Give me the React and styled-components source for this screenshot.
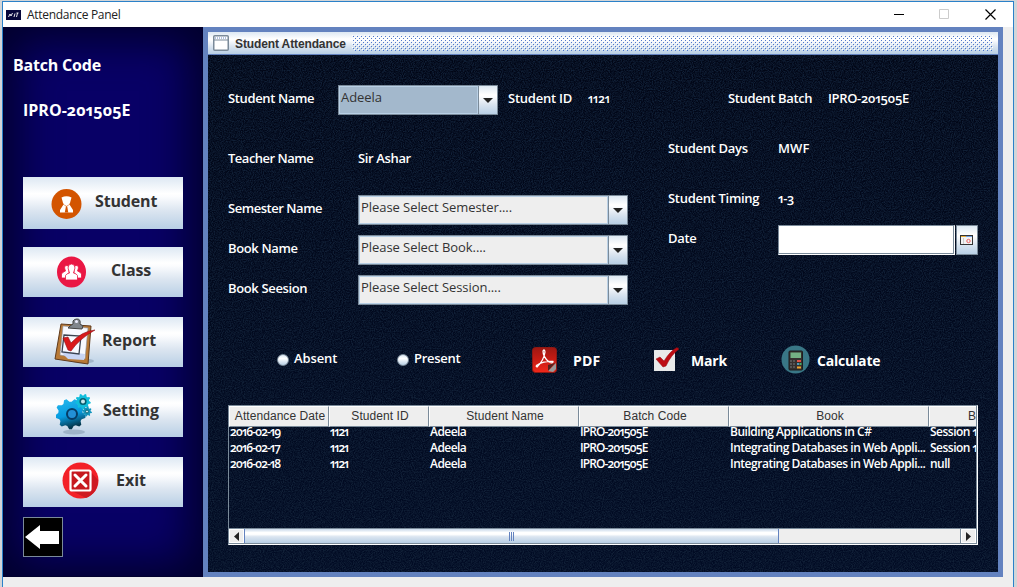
import React from "react";
import styled, { createGlobalStyle, css } from "styled-components";

const steel = "#7a8a99";
const blue = "#6382bf";
const metal = "linear-gradient(#dde8f3 0%, #ffffff 32%, #fbfcfe 38%, #dbe5f0 65%, #b8cfe5 100%)";
const humanist = `"Open Sans", "Noto Sans", sans-serif`;
const arial = `"Liberation Sans", Arial, sans-serif`;

const Global = createGlobalStyle`
  * { box-sizing: border-box; }
  html, body { margin: 0; height: 100%; overflow: hidden; }
  body { background: #d2d5d8; font-family: ${humanist}; font-size: 13px; color: #333; }
  #root { height: 100%; }
  svg { display: block; flex: none; }
`;

const Desktop = styled.div`
  height: 587px;
  padding: 1px 3px 0 2px;
  overflow: hidden;
`;
const Window = styled.div`
  height: 587px;
  background: #eee;
  border: 1px solid #2b81c9;
  border-bottom: 0;
`;
const TitleBar = styled.header`
  display: flex;
  height: 25px;
  align-items: center;
  background: #fff;
  padding: 0 17px 0 3px;
`;
const AppIcon = styled.svg`
  margin-right: 6px;
`;
const WindowTitle = styled.span`
  flex: 1;
  font-size: 12px;
  line-height: 24px;
  letter-spacing: -0.3px;
  color: #222;
`;
const Controls = styled.div`
  display: flex;
  gap: 35px;
`;
const Body = styled.div`
  display: flex;
  height: 550px;
`;

const Sidebar = styled.aside`
  width: 200px;
  padding: 25px 20px 0;
  background: #080066;
  box-shadow: inset 0 0 42px 14px #02002c, inset 0 0 0 1px #05003a;
`;
const BatchTitle = styled.div`
  margin-left: -10px;
  height: 45px;
  font-size: 16px;
  font-weight: 700;
  line-height: 26px;
  letter-spacing: -0.2px;
  color: #fff;
`;
const BatchValue = styled.div`
  height: 80px;
  font-size: 16px;
  font-weight: 700;
  line-height: 26px;
  letter-spacing: 0;
  font-feature-settings: "onum" 1, "pnum" 1;
  color: #fff;
`;
const NavList = styled.nav`
  display: flex;
  flex-direction: column;
`;
const NavButton = styled.button`
  display: flex;
  width: 160px;
  height: ${(p) => p.$h || 50}px;
  margin: 0 0 ${(p) => p.$gap || 20}px;
  padding: 0 0 0 ${(p) => p.$start}px;
  border: 0;
  background: ${metal};
`;
const NavIcon = styled.span`
  width: ${(p) => p.$w}px;
  padding-top: ${(p) => p.$top}px;
`;
const NavText = styled.span`
  font: 700 16px/${(p) => p.$lh || 47}px ${humanist};
  letter-spacing: ${(p) => p.$ls || 0}px;
  color: #333;
  white-space: nowrap;
`;
const BackButton = styled.button`
  width: 40px;
  height: 40px;
  padding: 0;
  border: 1px solid ${steel};
  background: #000;
`;

const Frame = styled.main`
  width: 800px;
  padding: 5px;
  background: ${blue};
`;
const FrameTitle = styled.div`
  display: flex;
  align-items: center;
  height: 23px;
  padding: 0 5px 0 5px;
  border-bottom: 1px solid ${blue};
  background: ${metal};
`;
const FrameName = styled.span`
  width: 117px;
  margin-left: 6px;
  padding-top: 2px;
  font: 700 12px/20px ${arial};
  letter-spacing: -0.12px;
  color: #333;
  white-space: nowrap;
`;
const Bumps = styled.svg`
  flex: 1;
  height: 16px;
`;
const Panel = styled.section`
  position: relative;
  height: 517px;
  padding: 30px 20px 0;
  background: #020a19;
  color: #fff;
`;
const Grain = styled.svg`
  position: absolute;
  inset: 0;
  width: 100%;
  height: 100%;
`;
const Form = styled.div`
  position: relative;
`;
const Row = styled.div`
  display: flex;
  height: 30px;
  margin-top: ${(p) => p.$gap || 0}px;
`;
const Columns = styled.div`
  display: flex;
`;
const Column = styled.div`
  width: ${(p) => p.$w}px;
`;
const Label = styled.span`
  width: ${(p) => p.$w}px;
  font-weight: 600;
  font-size: ${(p) => p.$size || 13}px;
  line-height: 27px;
  letter-spacing: ${(p) => p.$ls ?? -0.36}px;
  font-feature-settings: "onum" 1, "pnum" 1;
  white-space: nowrap;
`;
const ComboBox = styled.div`
  display: flex;
  width: ${(p) => p.$w}px;
  height: 30px;
  margin-right: 10px;
  border: 1px solid ${steel};
`;
const ComboValue = styled.span`
  flex: 1;
  padding-left: 1px;
  border: 1px solid #b8cfe5;
  background: ${(p) => (p.$active ? "#a3b8cc" : "#eee")};
  color: #333;
  line-height: 21px;
  letter-spacing: -0.06px;
  white-space: nowrap;
`;
const ComboButton = styled.span`
  display: flex;
  width: 19px;
  align-items: center;
  justify-content: center;
  border-left: 1px solid ${steel};
  background: ${metal};
`;
const DateField = styled.div`
  display: flex;
  gap: 1px;
  width: 200px;
`;
const DateInput = styled.div`
  width: 177px;
  padding: 0 1px 1px 0;
  border: 1px solid ${steel};
  border-right-color: #fff;
  border-bottom-color: #fff;
  background: #fff;
  box-shadow: inset -1px -1px ${steel};
`;
const DateButton = styled.div`
  display: flex;
  width: 22px;
  align-items: center;
  justify-content: center;
  border: 1px solid ${steel};
  background: ${metal};
`;

const Actions = styled.div`
  display: flex;
  height: 40px;
  margin: 35px 0 25px;
  padding-left: 49px;
`;
const Radio = styled.label`
  display: flex;
  width: ${(p) => p.$w}px;
  height: 37px;
  align-items: center;
  gap: 5px;
`;
const RadioDot = styled.i`
  width: 12px;
  height: 12px;
  margin-top: 3px;
  border: 1px solid ${steel};
  border-radius: 50%;
  background: linear-gradient(#dde8f3, #fff 35%, #b8cfe5);
`;
const Action = styled.div`
  display: flex;
  width: ${(p) => p.$w}px;
  align-items: center;
`;
const ActionText = styled.span`
  margin-left: ${(p) => p.$ml}px;
  padding-top: 1px;
  font-weight: 700;
  font-size: 14px;
  letter-spacing: ${(p) => p.$ls || 0}px;
`;

const TableBox = styled.div`
  display: flex;
  flex-direction: column;
  width: 750px;
  height: 140px;
  border: 1px solid ${steel};
  border-right-color: #fff;
  border-bottom-color: #fff;
`;
const TableView = styled.div`
  width: 748px;
  height: 122px;
  overflow: hidden;
  border-right: 1px solid ${steel};
`;
const columnGrid = css`
  display: grid;
  grid-template-columns: 100px 100px 150px 150px 200px 150px;
  width: 850px;
`;
const HeaderRow = styled.div`
  ${columnGrid}
  height: 20px;
`;
const HeaderCell = styled.div`
  padding-left: 2px;
  border: 1px solid #fff;
  border-right-color: ${steel};
  border-bottom-color: ${steel};
  background: #eee;
  color: #333;
  font: 12px/19px ${arial};
  letter-spacing: 0.06px;
  text-align: center;
  white-space: nowrap;
`;
const DataRow = styled.div`
  ${columnGrid}
  height: 16px;
`;
const DataCell = styled.div`
  padding-left: 1px;
  font-size: 12px;
  font-weight: 600;
  line-height: 12px;
  letter-spacing: ${(p) => p.$ls}px;
  font-feature-settings: "onum" 1, "pnum" 1;
  white-space: nowrap;
`;
const ScrollBar = styled.div`
  display: flex;
  height: 16px;
  border: solid ${steel};
  border-width: 1px 1px 1px 0;
  background: #eee;
`;
const ScrollButton = styled.div`
  display: flex;
  width: 15px;
  align-items: center;
  justify-content: center;
  border: 1px solid #fff;
  box-shadow: ${(p) => (p.$end ? `-1px 0 ${steel}` : "none")};
`;
const Thumb = styled.div`
  display: flex;
  width: 535px;
  align-items: center;
  justify-content: center;
  border: solid ${blue};
  border-width: 0 1px;
  background: linear-gradient(#c8d8ea, #fff 25%, #fff 38%, #dbe5f0 55%, #b8cfe5);
`;
const Track = styled.div`
  flex: 1;
`;

const Arrow = ({ d, w = 10, h = 5 }) => (
  <svg width={w} height={h} viewBox={`0 0 ${w} ${h}`}><path d={d} fill="#222" /></svg>
);

const Combo = ({ w, active, children }) => (
  <ComboBox $w={w}>
    <ComboValue $active={active}>{children}</ComboValue>
    <ComboButton><Arrow d="M0 0H10L5 5Z" /></ComboButton>
  </ComboBox>
);

const StudentIcon = () => (
  <svg width="32" height="32" viewBox="0 0 32 32">
    <circle cx="15.500" cy="16" r="15" fill="#d35400" />
    <path d="M10.500 9.500Q15.500 7 20.500 9.500L19.500 13Q19 17 15.500 18Q12 17 11.500 13Z" fill="#fff" />
    <path d="M12.500 16.500L15.500 19L18.500 16.500L22 22V24.500H9V22Z" fill="#fff" />
    <path d="M14.800 19h1.500l1 5.500h-3.500Z" fill="#d35400" />
  </svg>
);
const ClassIcon = () => (
  <svg width="30" height="34" viewBox="0 0 30 34">
    <ellipse cx="14.500" cy="17" rx="14.500" ry="15.500" fill="#ea1744" />
    <g fill="#fff" stroke="#ea1744" strokeWidth="0.800">
      <path d="M4.500 23V19Q5.500 17 8.500 16Q6.500 11 9 10.500Q12 10 12 13V23ZM24.500 23V19Q23.500 17 20.500 16Q22.500 11 20 10.500Q17 10 17 13V23Z" />
      <path d="M8.500 25V20.500Q9.500 18.500 12.500 18L11 13Q11 9 14.500 9Q18 9 18 13L16.500 18Q19.500 18.500 20.500 20.500V25Z" />
    </g>
  </svg>
);
const ReportIcon = () => (
  <svg width="42" height="48" viewBox="0 0 42 48">
    <ellipse cx="29" cy="43" rx="11" ry="2.500" fill="#8195aa" opacity="0.5" />
    <path d="M7 6L37 8L34 46L1 41Z" fill="#b87936" stroke="#5f3a1c" />
    <path d="M9 8L34 10L31 41L6 37Z" fill="#f7f9ff" stroke="#8993a2" strokeWidth="0.600" />
    <path d="M6 33L14 41L30 42L31 36Z" fill="#c8d5f5" />
    <path d="M10 17L27 18L25 36L8 34Z" fill="none" stroke="#3b4352" strokeWidth="1.300" />
    <path d="M16 8L19 6V3Q20 1 23 1Q27 1 26 6L29 8L28 11L14 10Z" fill="#81868c" stroke="#444" />
    <circle cx="22.500" cy="3.500" r="1.500" fill="#eef" />
    <path d="M9 20L14 19L17 25Q28 13 41 12Q25 21 17 33L14 32Z" fill="#d9191b" stroke="#8f1115" strokeWidth="0.600" />
  </svg>
);
const gear = (cx, cy, r, n, depth) => {
  const points = [];
  for (let i = 0; i < n * 4; i++) {
    const radius = i % 4 < 2 ? r : r - depth;
    const angle = ((i + 0.5) / (n * 4)) * Math.PI * 2;
    points.push(`${cx + radius * Math.cos(angle)} ${cy + radius * Math.sin(angle)}`);
  }
  return `M${points.join("L")}Z`;
};
const SettingIcon = () => (
  <svg width="36" height="42" viewBox="0 0 36 42">
    <defs>
      <linearGradient id="gearFill" x2="0.300" y2="1">
        <stop stopColor="#27b9ed" /><stop offset="0.600" stopColor="#079be0" /><stop offset="1" stopColor="#06394f" />
      </linearGradient>
    </defs>
    <ellipse cx="18" cy="38" rx="11" ry="2.500" fill="#7d94aa" opacity="0.5" />
    <path d={gear(14.5, 20, 15.3, 9, 3)} fill="url(#gearFill)" />
    <path d={gear(27, 7.5, 7.8, 9, 1.7)} fill="#10bedc" />
    <path d={gear(31, 17.5, 5, 8, 1.3)} fill="#1294bd" />
    <circle cx="16" cy="20" r="5" fill="#2390d6" stroke="#063c65" strokeWidth="2" />
    <circle cx="27" cy="7.500" r="2.800" fill="#c7e6ed" stroke="#065f70" strokeWidth="1.600" />
    <circle cx="31" cy="17.500" r="1.500" fill="#c7e6ed" stroke="#076678" />
  </svg>
);
const ExitIcon = () => (
  <svg width="38" height="38" viewBox="0 0 38 38">
    <circle cx="18.500" cy="18.500" r="18" fill="#f32128" />
    <path d="M28 9L36 18Q36 31 24 36L10 29Z" fill="#ce1a22" />
    <rect x="8.500" y="8.500" width="20" height="20" rx="1.500" fill="#c71920" stroke="#fff" strokeWidth="2.200" />
    <path d="M13 13L24 24M24 13L13 24" stroke="#fff" strokeWidth="3" strokeLinecap="round" />
  </svg>
);
const PdfIcon = () => (
  <svg width="25" height="26" viewBox="0 0 25 26">
    <defs>
      <linearGradient id="pdfFill" x2="0" y2="1"><stop stopColor="#9e1712" /><stop offset="0.500" stopColor="#c81c14" /><stop offset="1" stopColor="#f0281b" /></linearGradient>
    </defs>
    <rect x="0.500" y="0.500" width="24" height="25" rx="3" fill="url(#pdfFill)" stroke="#8e1813" />
    <path d="M11 4Q12.500 1.500 13 5Q12 13 5 20Q3 19 6 17.500Q12 14 21 14.500Q21 17 17 15Q11 10 11 4Z" fill="none" stroke="#fff" strokeWidth="1.300" />
    <path d="M16 24L24 16V22L21 25Z" fill="#999" /><path d="M16 24V18L23 16Z" fill="#54221e" />
  </svg>
);
const MarkIcon = () => (
  <svg width="27" height="26" viewBox="0 0 27 26">
    <rect x="1" y="3" width="21" height="21" rx="0.500" fill="#e9eaea" />
    <path d="M3 12L7 10L11 14Q17 4 24 0.500L26 2Q18 8 13 19L10 20Z" fill="#bd0d14" stroke="#900c12" strokeWidth="0.500" />
  </svg>
);
const CalcIcon = () => (
  <svg width="30" height="30" viewBox="0 0 30 30">
    <circle cx="14.500" cy="14.500" r="14" fill="#397786" />
    <rect x="8" y="6" width="13.500" height="19" rx="1" fill="#35302f" stroke="#1e1d1d" />
    <rect x="9.500" y="7.500" width="10.500" height="5.500" fill="#74b184" />
    <g fill="#555"><path d="M9 15h2v2h-2zM12 15h2v2h-2zM9 18h2v2h-2zM12 18h2v2h-2zM9 21h2v2h-2zM12 21h2v2h-2z" /></g>
    <path d="M16 15h4v2h-4z" fill="#df5146" /><path d="M16 18h2v2h-2z" fill="#4a9abd" /><path d="M18.500 18h2v2h-2z" fill="#46aa68" /><path d="M16 21.500h4v2h-4z" fill="#eca42e" />
  </svg>
);

const nav = [
  { text: "Student", icon: StudentIcon, h: 52, gap: 18, start: 28, w: 44, top: 11, lh: 49, ls: -0.15 },
  { text: "Class", icon: ClassIcon, start: 34, w: 54, top: 8, ls: -0.1 },
  { text: "Report", icon: ReportIcon, start: 31, w: 48, top: 1 },
  { text: "Setting", icon: SettingIcon, start: 33, w: 47, top: 7, ls: -0.1 },
  { text: "Exit", icon: ExitIcon, gap: 10, start: 39, w: 54, top: 5 },
];
const headers = ["Attendance Date", "Student ID", "Student Name", "Batch Code", "Book", "Book Session"];
const tracking = [-0.95, -1, -0.55, -0.92, -0.48, -0.5];
const records = [
  ["2016-02-19", "1121", "Adeela", "IPRO-201505E", "Building Applications in C#", "Session 1"],
  ["2016-02-17", "1121", "Adeela", "IPRO-201505E", "Integrating Databases in Web Appli...", "Session 1"],
  ["2016-02-18", "1121", "Adeela", "IPRO-201505E", "Integrating Databases in Web Appli...", "null"],
];

export default function App() {
  return (
    <Desktop>
      <Global />
      <Window>
        <TitleBar>
          <AppIcon width="15" height="10" viewBox="0 0 15 10">
            <path d="M0 0H15V10H0Z" fill="#07073b" />
            <path d="M2.500 7L4 4L5 6L6.500 3M8 7L9 3.500M10.500 3H12.500M11.500 3L10.500 7" stroke="#fff" fill="none" strokeWidth="0.900" />
          </AppIcon>
          <WindowTitle>Attendance Panel</WindowTitle>
          <Controls>
            <svg width="11" height="11"><path d="M1 5.500H11" stroke="#000" /></svg>
            <svg width="11" height="11"><path d="M0.500 0.500H9.500V9.500H0.500Z" fill="none" stroke="#ccc" /></svg>
            <svg width="11" height="11"><path d="M0.500 0.500L10.500 10.500M10.500 0.500L0.500 10.500" stroke="#000" strokeWidth="1.200" /></svg>
          </Controls>
        </TitleBar>
        <Body>
          <Sidebar>
            <BatchTitle>Batch Code</BatchTitle>
            <BatchValue>IPRO-201505E</BatchValue>
            <NavList>
              {nav.map(({ text, icon: Icon, h, gap, start, w, top, ls, lh }) => (
                <NavButton key={text} $h={h} $gap={gap} $start={start}>
                  <NavIcon $w={w} $top={top}><Icon /></NavIcon>
                  <NavText $ls={ls} $lh={lh}>{text}</NavText>
                </NavButton>
              ))}
            </NavList>
            <BackButton>
              <svg width="38" height="38"><path d="M1 19L16 7V13H35V26H16V31Z" fill="#fff" /></svg>
            </BackButton>
          </Sidebar>
          <Frame>
            <FrameTitle>
              <svg width="16" height="16" viewBox="0 0 16 16">
                <rect x="0.750" y="0.750" width="14.500" height="14.500" rx="1" fill="#fff" stroke={steel} strokeWidth="1.500" />
                <path d="M1 5H15" stroke={steel} /><path d="M2 3H14" stroke={blue} strokeDasharray="1 1" />
              </svg>
              <FrameName>Student Attendance</FrameName>
              <Bumps shapeRendering="crispEdges">
                <defs>
                  <pattern id="bumps" width="4" height="4" patternUnits="userSpaceOnUse">
                    <path d="M0 0h1v1h-1zM2 2h1v1h-1z" fill="#fff" />
                    <path d="M1 1h1v1h-1zM3 3h1v1h-1z" fill="#4f78cc" />
                  </pattern>
                </defs>
                <rect width="100%" height="100%" fill="url(#bumps)" />
              </Bumps>
            </FrameTitle>
            <Panel>
              <Grain>
                <defs>
                  <linearGradient id="depth" x2="0" y2="1"><stop stopColor="#010616" /><stop offset="1" stopColor="#010b24" /></linearGradient>
                  <filter id="noise" x="0" y="0" width="100%" height="100%" colorInterpolationFilters="sRGB">
                    <feTurbulence type="fractalNoise" baseFrequency="0.9" numOctaves="2" />
                    <feColorMatrix values="0 0 0 0 0.065  0 0 0 0 0.125  0 0 0 0 0.215  2.4 0 0 0 -0.800" />
                  </filter>
                </defs>
                <rect width="100%" height="100%" fill="url(#depth)" />
                <rect width="100%" height="100%" filter="url(#noise)" />
              </Grain>
              <Form>
                <Row>
                  <Label $w={110}>Student Name</Label>
                  <Combo w={160} active>Adeela</Combo>
                  <Label $w={80} $ls={-0.25}>Student ID</Label>
                  <Label $w={140} $size={12} $ls={-0.1}>1121</Label>
                  <Label $w={100}>Student Batch</Label>
                  <Label $ls={-0.35}>IPRO-201505E</Label>
                </Row>
                <Columns>
                  <Column $w={440}>
                    <Row $gap={30}><Label $w={130} $ls={-0.5}>Teacher Name</Label><Label>Sir Ashar</Label></Row>
                    <Row $gap={20}><Label $w={130} $ls={-0.46}>Semester Name</Label><Combo w={270}>Please Select Semester....</Combo></Row>
                    <Row $gap={10}><Label $w={130}>Book Name</Label><Combo w={270}>Please Select Book....</Combo></Row>
                    <Row $gap={10}><Label $w={130}>Book Seesion</Label><Combo w={270}>Please Select Session....</Combo></Row>
                  </Column>
                  <Column $w={310}>
                    <Row $gap={20}><Label $w={110} $ls={-0.3}>Student Days</Label><Label $ls={0.1}>MWF</Label></Row>
                    <Row $gap={20}><Label $w={110} $ls={-0.3}>Student Timing</Label><Label>1-3</Label></Row>
                    <Row $gap={10}>
                      <Label $w={110} $ls={-0.3}>Date</Label>
                      <DateField>
                        <DateInput />
                        <DateButton>
                          <svg width="14" height="11"><rect x="0.500" y="0.500" width="12" height="9" fill="#f2f2f2" stroke="#333" /><path d="M1 1.500H6" stroke="#e8ae3c" /><path d="M6 1.500H12" stroke="#6f9de0" /><circle cx="8.500" cy="6" r="1.700" fill="none" stroke="#ee6262" /><path d="M3.500 3v6" stroke="#ccc" /></svg>
                        </DateButton>
                      </DateField>
                    </Row>
                  </Column>
                </Columns>
                <Actions>
                  <Radio $w={120}><RadioDot /><Label $ls={-0.12}>Absent</Label></Radio>
                  <Radio $w={135}><RadioDot /><Label $ls={-0.28}>Present</Label></Radio>
                  <Action $w={121}><PdfIcon /><ActionText $ml={16} $ls={0.2}>PDF</ActionText></Action>
                  <Action $w={128}><MarkIcon /><ActionText $ml={11} $ls={-0.2}>Mark</ActionText></Action>
                  <Action $w={130}><CalcIcon /><ActionText $ml={6} $ls={-0.2}>Calculate</ActionText></Action>
                </Actions>
                <TableBox>
                  <TableView>
                    <HeaderRow>{headers.map((name) => <HeaderCell key={name}>{name}</HeaderCell>)}</HeaderRow>
                    {records.map((record) => (
                      <DataRow key={record[0]}>
                        {record.map((value, i) => <DataCell key={i} $ls={tracking[i]}>{value}</DataCell>)}
                      </DataRow>
                    ))}
                  </TableView>
                  <ScrollBar>
                    <ScrollButton><Arrow w={5} h={9} d="M5 0V9L0 4.500Z" /></ScrollButton>
                    <Thumb><svg width="6" height="9"><path d="M0.500 0V9M2.500 0V9M4.500 0V9" stroke={blue} /></svg></Thumb>
                    <Track />
                    <ScrollButton $end><Arrow w={5} h={9} d="M0 0V9L5 4.500Z" /></ScrollButton>
                  </ScrollBar>
                </TableBox>
              </Form>
            </Panel>
          </Frame>
        </Body>
      </Window>
    </Desktop>
  );
}
